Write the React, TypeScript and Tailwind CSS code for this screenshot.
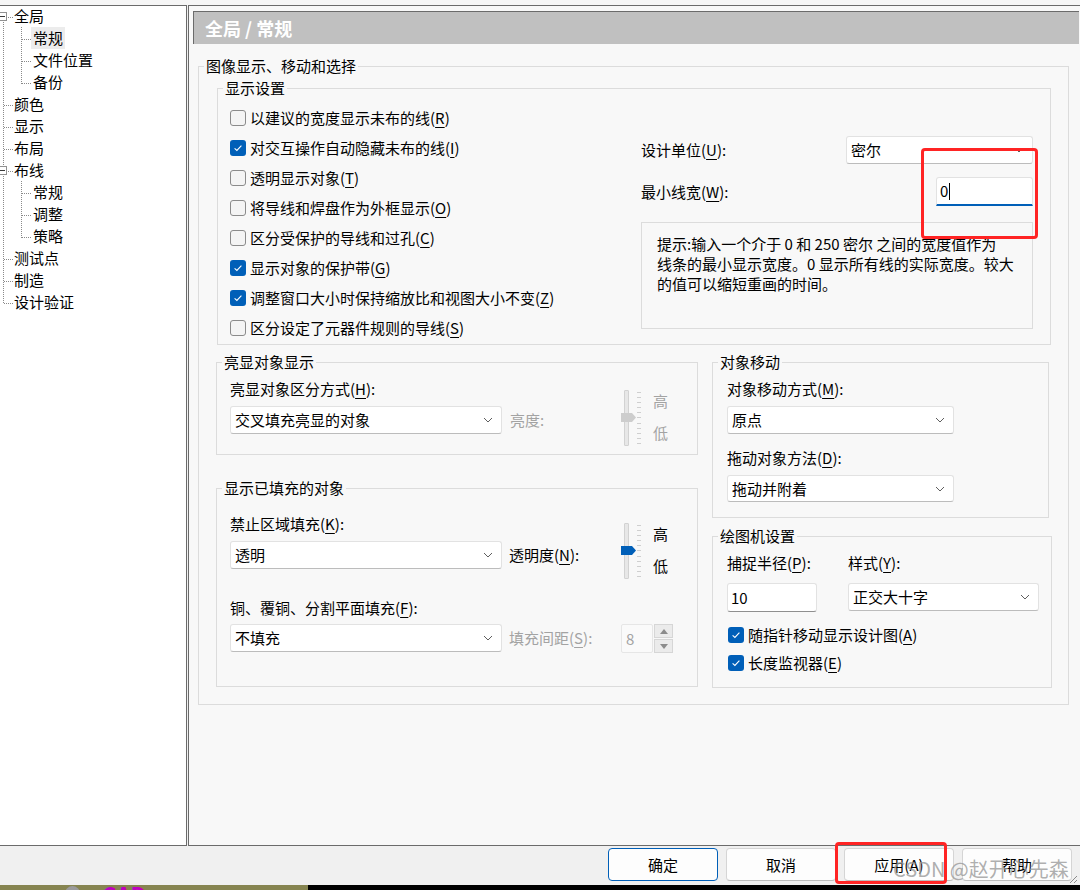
import React from 'react'

type Node = { label: string; level: 0 | 1; selected?: boolean }

const treeItems: Node[] = [
  { label: '全局', level: 0 },
  { label: '常规', level: 1, selected: true },
  { label: '文件位置', level: 1 },
  { label: '备份', level: 1 },
  { label: '颜色', level: 0 },
  { label: '显示', level: 0 },
  { label: '布局', level: 0 },
  { label: '布线', level: 0 },
  { label: '常规', level: 1 },
  { label: '调整', level: 1 },
  { label: '策略', level: 1 },
  { label: '测试点', level: 0 },
  { label: '制造', level: 0 },
  { label: '设计验证', level: 0 },
]

// access-key label, e.g. 设计单位(U):
function Key({ text, k, colon }: { text: string; k: string; colon?: boolean }) {
  return (
    <span className="whitespace-nowrap">
      {text}(<span className="underline underline-offset-[3px]">{k}</span>){colon ? ':' : ''}
    </span>
  )
}

function Check({ checked, children }: { checked?: boolean; children: React.ReactNode }) {
  return (
    <div className="flex items-center gap-[4px]">
      {checked ? (
        <span className="flex w-[16px] h-[16px] items-center justify-center rounded-[3px] bg-[#005fb8]">
          <svg width="10" height="8" viewBox="0 0 10 8">
            <path d="M1.6 4.3 L3.9 6.4 L8.4 1.7" stroke="white" strokeWidth="1.1" fill="none" />
          </svg>
        </span>
      ) : (
        <span className="w-[16px] h-[16px] rounded-[3px] border border-[#8b8b8b] bg-[#f4f4f4]" />
      )}
      <span>{children}</span>
    </div>
  )
}

function Chevron() {
  return (
    <svg width="10" height="6" viewBox="0 0 10 6">
      <path d="M1 1 L5 5 L9 1" stroke="#5f5f5f" strokeWidth="1" fill="none" />
    </svg>
  )
}

function Select({ value, className }: { value: string; className: string }) {
  return (
    <div
      className={`flex items-center justify-between rounded-[3px] border border-[#e2e2e2] border-b-[#bcbcbc] bg-white pl-[4px] pr-[8px] ${className}`}
    >
      <span>{value}</span>
      <Chevron />
    </div>
  )
}

function Group({ title, className, children }: { title: string; className: string; children?: React.ReactNode }) {
  return (
    <div className={`relative border border-[#dcdcdc] ${className}`}>
      <span className="absolute -top-[11px] left-[5px] px-[2px] bg-[#f8f8f8] leading-[20px] whitespace-nowrap">
        {title}
      </span>
      {children}
    </div>
  )
}

function Slider({ enabled }: { enabled?: boolean }) {
  return (
    <div className="flex h-[56px]">
      <div className="relative w-[15px] h-full">
        <div className="absolute left-[3px] top-0 bottom-0 w-[5px] rounded-[1px] border border-[#d2d2d2] bg-[#e7e7e7]" />
        <svg className="absolute left-0 top-[23px]" width="15" height="9" viewBox="0 0 15 9">
          <path d="M0 0 H11 L15 4.5 L11 9 H0 Z" fill={enabled ? '#005fb8' : '#cdcdcd'} />
        </svg>
      </div>
      <div className="ml-[1px] flex w-[5px] flex-col justify-between py-[2px]">
        {Array.from({ length: 11 }).map((_, i) => (
          <span key={i} className="block h-px w-[4px] bg-[#cfcfcf]" />
        ))}
      </div>
      <div className={`ml-[11px] flex flex-col gap-[12px] pt-[1px] ${enabled ? 'text-black' : 'text-[#a3a3a3]'}`}>
        <span>高</span>
        <span>低</span>
      </div>
    </div>
  )
}

function Tree() {
  const rowY = treeItems.map((_, i) => 17 + i * 22)
  return (
    <div className="relative w-[187px] shrink-0 border-t border-r border-b border-[#6b6b6b] bg-white">
      <svg className="absolute -top-[6px] left-0 pointer-events-none" width="186" height="320" shapeRendering="crispEdges">
        <g stroke="#8a8a8a" strokeDasharray="1 1" strokeWidth="1">
          <line x1="3.5" y1="22" x2="3.5" y2="166" />
          <line x1="3.5" y1="176" x2="3.5" y2="304" />
          <line x1="21.5" y1="27" x2="21.5" y2="84" />
          <line x1="21.5" y1="181" x2="21.5" y2="238" />
          {treeItems.map((n, i) => {
            const y = rowY[i] + 0.5
            if (n.level === 1) return <line key={i} x1="22" y1={y} x2="31" y2={y} />
            if (n.label === '全局' || n.label === '布线') return <line key={i} x1="8" y1={y} x2="13" y2={y} />
            return <line key={i} x1="4" y1={y} x2="13" y2={y} />
          })}
        </g>
        {[17, 171].map((y) => (
          <g key={y}>
            <rect x="-1.5" y={y - 4.5} width="8" height="8" fill="white" stroke="#919191" />
            <line x1="0" y1={y - 0.5} x2="5" y2={y - 0.5} stroke="#3a3a3a" />
          </g>
        ))}
      </svg>
      <div className="relative -mt-px flex flex-col">
        {treeItems.map((n, i) => (
          <div key={i} className="flex h-[22px] items-center">
            {n.level === 0 ? (
              <span className="ml-[14px]">{n.label}</span>
            ) : (
              <span className={`ml-[31px] px-[2px] leading-[22px] ${n.selected ? 'bg-[#ececec]' : ''}`}>{n.label}</span>
            )}
          </div>
        ))}
      </div>
    </div>
  )
}

function Button({ label, primary }: { label: React.ReactNode; primary?: boolean }) {
  return (
    <div
      className={`flex h-[33px] w-[110px] items-center justify-center rounded-[4px] bg-[#fdfdfd] ${
        primary ? 'border border-[#005fb8]' : 'border border-[#d5d5d5] border-b-[#bdbdbd]'
      }`}
    >
      {label}
    </div>
  )
}

export default function App() {
  return (
    <div className="relative h-[890px] w-[1080px] overflow-hidden bg-[#f0f0f0] font-['Noto_Sans_CJK_SC','Microsoft_YaHei',sans-serif] text-[15px] leading-[20px] text-black">
      <div className="h-[5px] bg-[#f6f6f6]" />
      <div className="flex h-[841px] gap-px">
        <Tree />

        {/* settings page */}
        <div className="flex-1 border-t border-l border-b border-[#6b6b6b] bg-[#f8f8f8]">
          <div className="ml-[4px] mt-[5px] flex h-[33px] w-[886px] items-center border-t border-l border-[#6b6b6b] bg-[#c0c0c0] pl-[11px]">
            <span className="text-[18px] font-bold text-white">全局 / 常规</span>
          </div>

          <Group title="图像显示、移动和选择" className="ml-[9px] mt-[22px] h-[639px] w-[871px]">
            <Group title="显示设置" className="ml-[18px] mt-[21px] flex h-[257px] w-[834px]">
              <div className="flex w-[423px] flex-col pl-[12px] pt-[14px] [&>div]:h-[30px]">
                <Check><Key text="以建议的宽度显示未布的线" k="R" /></Check>
                <Check checked><Key text="对交互操作自动隐藏未布的线" k="I" /></Check>
                <Check><Key text="透明显示对象" k="T" /></Check>
                <Check><Key text="将导线和焊盘作为外框显示" k="O" /></Check>
                <Check><Key text="区分受保护的导线和过孔" k="C" /></Check>
                <Check checked><Key text="显示对象的保护带" k="G" /></Check>
                <Check checked><Key text="调整窗口大小时保持缩放比和视图大小不变" k="Z" /></Check>
                <Check><Key text="区分设定了元器件规则的导线" k="S" /></Check>
              </div>
              <div className="flex w-[392px] flex-col pt-[47px]">
                <div className="flex h-[28px] items-center justify-between">
                  <Key text="设计单位" k="U" colon />
                  <Select value="密尔" className="h-[28px] w-[187px]" />
                </div>
                <div className="mt-[13px] flex h-[29px] items-center justify-between">
                  <Key text="最小线宽" k="W" colon />
                  <div className="flex h-[29px] w-[97px] items-center rounded-t-[3px] border border-[#e2e2e2] border-b-2 border-b-[#005fb8] bg-white pl-[3px]">
                    <span>0</span>
                    <span className="ml-px h-[17px] w-px bg-black" />
                  </div>
                </div>
                <div className="mt-[16px] h-[107px] border border-[#dcdcdc] pl-[15px] pt-[11px] whitespace-nowrap">
                  <div>提示:输入一个介于 0 和 250 密尔 之间的宽度值作为</div>
                  <div>线条的最小显示宽度。0 显示所有线的实际宽度。较大</div>
                  <div>的值可以缩短重画的时间。</div>
                </div>
              </div>
            </Group>

            <div className="ml-[17px] mt-[17px] flex gap-[14px]">
              <div className="flex flex-col">
                <Group title="亮显对象显示" className="flex h-[93px] w-[482px]">
                  <div className="w-[404px] pl-[13px] pt-[16px]">
                    <Key text="亮显对象区分方式" k="H" colon />
                    <div className="mt-[7px] flex items-center">
                      <Select value="交叉填充亮显的对象" className="h-[28px] w-[272px]" />
                      <span className="ml-[8px] text-[#a3a3a3]">亮度:</span>
                    </div>
                  </div>
                  <div className="mt-[27px]">
                    <Slider />
                  </div>
                </Group>

                <Group title="显示已填充的对象" className="mt-[33px] flex h-[199px] w-[482px]">
                  <div className="w-[404px] pl-[13px] pt-[25px]">
                    <Key text="禁止区域填充" k="K" colon />
                    <div className="mt-[7px] flex items-center">
                      <Select value="透明" className="h-[28px] w-[272px]" />
                      <span className="ml-[7px]"><Key text="透明度" k="N" colon /></span>
                    </div>
                    <div className="mt-[29px]">
                      <Key text="铜、覆铜、分割平面填充" k="F" colon />
                    </div>
                    <div className="mt-[6px] flex items-center">
                      <Select value="不填充" className="h-[28px] w-[272px]" />
                      <span className="ml-[7px] text-[#a3a3a3]"><Key text="填充间距" k="S" colon /></span>
                    </div>
                  </div>
                  <div className="mt-[34px] flex flex-col">
                    <Slider enabled />
                    <div className="mt-[45px] flex">
                      <div className="flex h-[29px] w-[32px] items-center rounded-[2px] border border-[#e6e6e6] bg-[#fafafa] pl-[4px] text-[#a3a3a3]">
                        8
                      </div>
                      <div className="ml-[1px] flex h-[29px] w-[19px] flex-col gap-px">
                        <div className="flex flex-1 items-center justify-center border border-[#d6d6d6] bg-[#ebebeb]">
                          <svg width="8" height="5" viewBox="0 0 8 5"><path d="M0 5 L4 0 L8 5 Z" fill="#8c8c8c" /></svg>
                        </div>
                        <div className="flex flex-1 items-center justify-center border border-[#d6d6d6] bg-[#ebebeb]">
                          <svg width="8" height="5" viewBox="0 0 8 5"><path d="M0 0 L4 5 L8 0 Z" fill="#8c8c8c" /></svg>
                        </div>
                      </div>
                    </div>
                  </div>
                </Group>
              </div>

              <div className="flex flex-col">
                <Group title="对象移动" className="h-[156px] w-[337px] pl-[14px] pt-[16px]">
                  <Key text="对象移动方式" k="M" colon />
                  <Select value="原点" className="mt-[7px] h-[28px] w-[227px]" />
                  <div className="mt-[14px]">
                    <Key text="拖动对象方法" k="D" colon />
                  </div>
                  <Select value="拖动并附着" className="mt-[7px] h-[27px] w-[227px]" />
                </Group>

                <Group title="绘图机设置" className="mt-[18px] h-[152px] w-[340px] pl-[14px] pt-[16px]">
                  <div className="flex">
                    <div className="w-[121px]">
                      <Key text="捕捉半径" k="P" colon />
                      <div className="mt-[10px] flex h-[29px] w-[90px] items-center rounded-[3px] border border-[#e2e2e2] border-b-[#8f8f8f] bg-white pl-[3px]">
                        10
                      </div>
                    </div>
                    <div>
                      <Key text="样式" k="Y" colon />
                      <Select value="正交大十字" className="mt-[10px] h-[28px] w-[191px]" />
                    </div>
                  </div>
                  <div className="mt-[9px] flex flex-col pl-px [&>div]:h-[28px]">
                    <Check checked><Key text="随指针移动显示设计图" k="A" /></Check>
                    <Check checked><Key text="长度监视器" k="E" /></Check>
                  </div>
                </Group>
              </div>
            </div>
          </Group>
        </div>
      </div>

      {/* dialog buttons */}
      <div className="flex h-[39px] justify-end gap-[8px] pr-[8px] pt-[2px]">
        <Button label="确定" primary />
        <Button label="取消" />
        <Button label="应用(A)" />
        <Button label="帮助" />
      </div>

      {/* taskbar edge */}
      <div className="flex h-[5px]">
        <div className="relative w-[308px] overflow-hidden bg-[#868450]">
          <span className="absolute left-[65px] top-[1px] h-[15px] w-[15px] rounded-full bg-[#9a9a9a]" />
          <span className="absolute left-[102px] top-[1px] text-[22px] font-bold leading-[16px] text-[#c000c0]">CAD</span>
        </div>
        <div className="flex-1 bg-black" />
      </div>

      {/* annotations */}
      <div className="absolute left-[921px] top-[148px] h-[91px] w-[117px] rounded-[4px] border-[3px] border-[#ff2424]" />
      <div className="absolute left-[835px] top-[842px] h-[42px] w-[112px] rounded-[4px] border-[3px] border-[#ff2424]" />
      <span className="absolute left-[893px] top-[855px] text-[20px] leading-[28px] text-[#9a9a9a]/80 whitespace-nowrap">
        CSDN @赵开心先森
      </span>
      <svg className="absolute left-[1068px] top-[874px]" width="10" height="10" viewBox="0 0 10 10">
        <path d="M9 2 L2 9 M9 6 L6 9" stroke="#8a8a8a" strokeWidth="1" />
      </svg>
    </div>
  )
}
